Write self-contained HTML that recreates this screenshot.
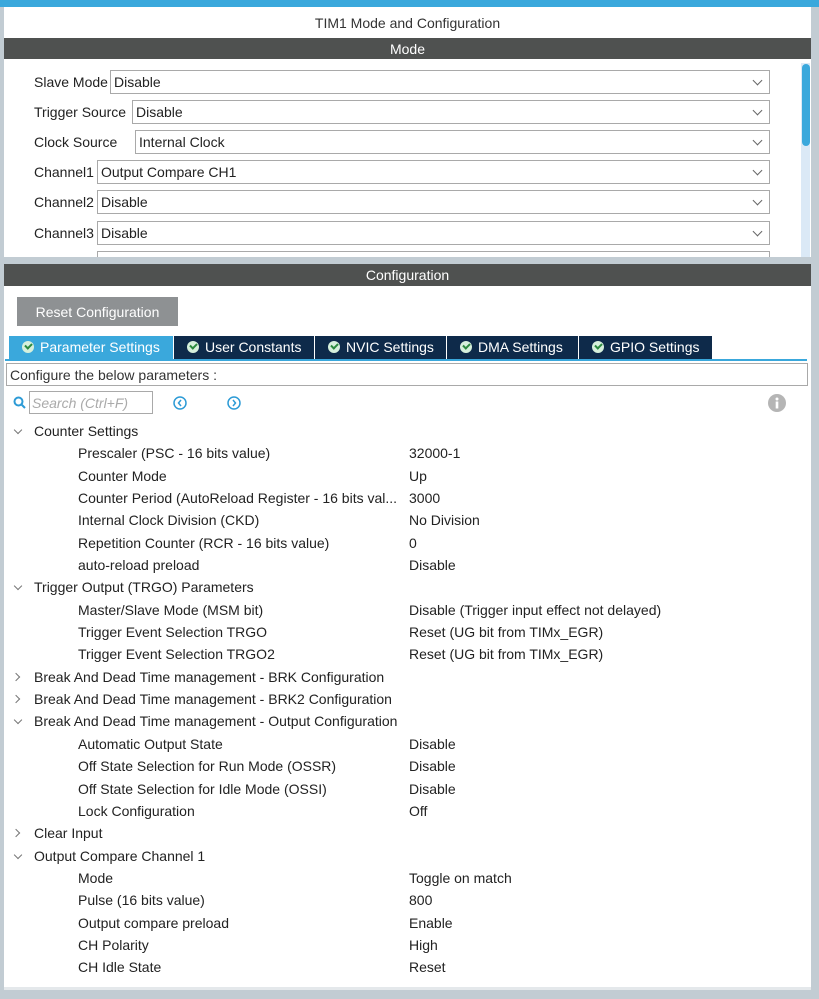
<!DOCTYPE html>
<html><head><style>
*{margin:0;padding:0;box-sizing:border-box}
body{width:819px;height:999px;background:#c2ccd3;position:relative;overflow:hidden;font-family:"Liberation Sans",Arial,sans-serif;font-size:14px;color:#222}
.a{position:absolute}
.hdr{background:#4f5150;color:#fff;text-align:center;font-size:14px}
.sel{position:absolute;height:24px;border:1px solid #a9a9a9;background:#fff;left:0;right:34px;padding-left:3px;line-height:22px}
.sel:after{content:"";position:absolute;right:8px;top:6px;width:6px;height:6px;border-right:1px solid #666;border-bottom:1px solid #666;transform:rotate(45deg)}
.lab{position:absolute;line-height:24px}
.tab{position:absolute;top:336px;height:23px;background:#0e2a4a;color:#fff;line-height:23px;font-size:14px;padding-left:31px}
.tab i{position:absolute;left:13px;top:5px;width:12px;height:12px;border-radius:50%;background:#d6f0dc}
.tab i:after{content:"";position:absolute;left:3px;top:2px;width:5px;height:3px;border-left:2px solid #2b8a3e;border-bottom:2px solid #2b8a3e;transform:rotate(-45deg)}
.rows{position:absolute;left:0;top:420px;width:800px}
.r{height:22.35px;line-height:22.35px;position:relative;white-space:nowrap}
.r .l{position:absolute;left:78px}
.r .v{position:absolute;left:409px}
.r.h .l{left:34px}
.ch{position:absolute;left:15px;top:7px;width:6px;height:6px;border-right:1px solid #777;border-bottom:1px solid #777;transform:rotate(45deg)}
.cr{position:absolute;left:13px;top:8px;width:6px;height:6px;border-right:1px solid #777;border-bottom:1px solid #777;transform:rotate(-45deg)}
</style></head><body>
<div class="a" style="left:0;top:0;width:819px;height:7px;background:#3aa8dc"></div>
<div class="a" style="left:4px;top:7px;width:807px;height:250px;background:#fff"></div>
<div class="a" style="left:4px;top:7px;width:807px;height:31px;text-align:center;line-height:32px;color:#333">TIM1 Mode and Configuration</div>
<div class="a hdr" style="left:4px;top:38px;width:807px;height:21px;line-height:22px">Mode</div>
<div class="a" style="left:801px;top:63px;width:9px;height:194px;background:#dbe9f6"></div>
<div class="a" style="left:802px;top:64px;width:8px;height:82px;background:#3aa8dc;border-radius:4px"></div>
<div class="a" style="left:34px;top:70px;width:770px;height:187px;overflow:hidden">
 <div class="lab" style="top:0">Slave Mode</div><div class="sel" style="top:0;left:76px">Disable</div>
 <div class="lab" style="top:30px">Trigger Source</div><div class="sel" style="top:30px;left:98px">Disable</div>
 <div class="lab" style="top:60px">Clock Source</div><div class="sel" style="top:60px;left:101px">Internal Clock</div>
 <div class="lab" style="top:90px">Channel1</div><div class="sel" style="top:90px;left:63px">Output Compare CH1</div>
 <div class="lab" style="top:120px">Channel2</div><div class="sel" style="top:120px;left:63px">Disable</div>
 <div class="lab" style="top:151px">Channel3</div><div class="sel" style="top:151px;left:63px">Disable</div>
 <div class="sel" style="top:181px;left:63px"></div>
</div>
<div class="a" style="left:4px;top:257px;width:807px;height:7px;background:#c2ccd3"></div>
<div class="a" style="left:4px;top:264px;width:807px;height:724px;background:#fff"></div>
<div class="a hdr" style="left:4px;top:264px;width:807px;height:22px;line-height:23px">Configuration</div>
<div class="a" style="left:17px;top:297px;width:161px;height:29px;background:#8e9193;color:#fff;line-height:31px;text-align:center">Reset Configuration</div>
<div class="tab" style="left:9px;width:164px;background:#3aa8dc"><i></i>Parameter Settings</div>
<div class="tab" style="left:174px;width:140px"><i></i>User Constants</div>
<div class="tab" style="left:315px;width:131px"><i></i>NVIC Settings</div>
<div class="tab" style="left:447px;width:131px"><i></i>DMA Settings</div>
<div class="tab" style="left:579px;width:133px"><i></i>GPIO Settings</div>
<div class="a" style="left:5px;top:359px;width:802px;height:2px;background:#3aa8dc"></div>
<div class="a" style="left:6px;top:363px;width:802px;height:23px;border:1px solid #a9a9a9;line-height:23px;padding-left:3px;color:#333">Configure the below parameters :</div>
<svg class="a" style="left:13px;top:396px" width="14" height="14"><circle cx="5.5" cy="5.5" r="4" fill="none" stroke="#2d9bd6" stroke-width="2"/><line x1="8.5" y1="8.5" x2="12" y2="12" stroke="#2d9bd6" stroke-width="2"/></svg>
<div class="a" style="left:29px;top:391px;width:124px;height:23px;border:1px solid #a9a9a9;font-style:italic;color:#aaa;line-height:22px;padding-left:2px">Search (Ctrl+F)</div>
<svg class="a" style="left:172px;top:395px" width="16" height="16"><circle cx="8" cy="8" r="6" fill="none" stroke="#2d9bd6" stroke-width="1.5"/><path d="M9 5L6.5 8L9 11" fill="none" stroke="#2d9bd6" stroke-width="1.5"/></svg>
<svg class="a" style="left:226px;top:395px" width="16" height="16"><circle cx="8" cy="8" r="6" fill="none" stroke="#2d9bd6" stroke-width="1.5"/><path d="M7 5L9.5 8L7 11" fill="none" stroke="#2d9bd6" stroke-width="1.5"/></svg>
<svg class="a" style="left:768px;top:394px" width="18" height="18"><circle cx="9" cy="9" r="9" fill="#b5b5b5"/><rect x="7.7" y="7.5" width="2.6" height="7" fill="#fff"/><circle cx="9" cy="5" r="1.5" fill="#fff"/></svg>
<div class="rows">
<div class="r h"><span class="ch"></span><span class="l">Counter Settings</span></div>
<div class="r"><span class="l">Prescaler (PSC - 16 bits value)</span><span class="v">32000-1</span></div>
<div class="r"><span class="l">Counter Mode</span><span class="v">Up</span></div>
<div class="r"><span class="l">Counter Period (AutoReload Register - 16 bits val...</span><span class="v">3000</span></div>
<div class="r"><span class="l">Internal Clock Division (CKD)</span><span class="v">No Division</span></div>
<div class="r"><span class="l">Repetition Counter (RCR - 16 bits value)</span><span class="v">0</span></div>
<div class="r"><span class="l">auto-reload preload</span><span class="v">Disable</span></div>
<div class="r h"><span class="ch"></span><span class="l">Trigger Output (TRGO) Parameters</span></div>
<div class="r"><span class="l">Master/Slave Mode (MSM bit)</span><span class="v">Disable (Trigger input effect not delayed)</span></div>
<div class="r"><span class="l">Trigger Event Selection TRGO</span><span class="v">Reset (UG bit from TIMx_EGR)</span></div>
<div class="r"><span class="l">Trigger Event Selection TRGO2</span><span class="v">Reset (UG bit from TIMx_EGR)</span></div>
<div class="r h"><span class="cr"></span><span class="l">Break And Dead Time management - BRK Configuration</span></div>
<div class="r h"><span class="cr"></span><span class="l">Break And Dead Time management - BRK2 Configuration</span></div>
<div class="r h"><span class="ch"></span><span class="l">Break And Dead Time management - Output Configuration</span></div>
<div class="r"><span class="l">Automatic Output State</span><span class="v">Disable</span></div>
<div class="r"><span class="l">Off State Selection for Run Mode (OSSR)</span><span class="v">Disable</span></div>
<div class="r"><span class="l">Off State Selection for Idle Mode (OSSI)</span><span class="v">Disable</span></div>
<div class="r"><span class="l">Lock Configuration</span><span class="v">Off</span></div>
<div class="r h"><span class="cr"></span><span class="l">Clear Input</span></div>
<div class="r h"><span class="ch"></span><span class="l">Output Compare Channel 1</span></div>
<div class="r"><span class="l">Mode</span><span class="v">Toggle on match</span></div>
<div class="r"><span class="l">Pulse (16 bits value)</span><span class="v">800</span></div>
<div class="r"><span class="l">Output compare preload</span><span class="v">Enable</span></div>
<div class="r"><span class="l">CH Polarity</span><span class="v">High</span></div>
<div class="r"><span class="l">CH Idle State</span><span class="v">Reset</span></div>
</div>
<div class="a" style="left:4px;top:987px;width:807px;height:3px;background:#e4e8eb"></div>
</body></html>
